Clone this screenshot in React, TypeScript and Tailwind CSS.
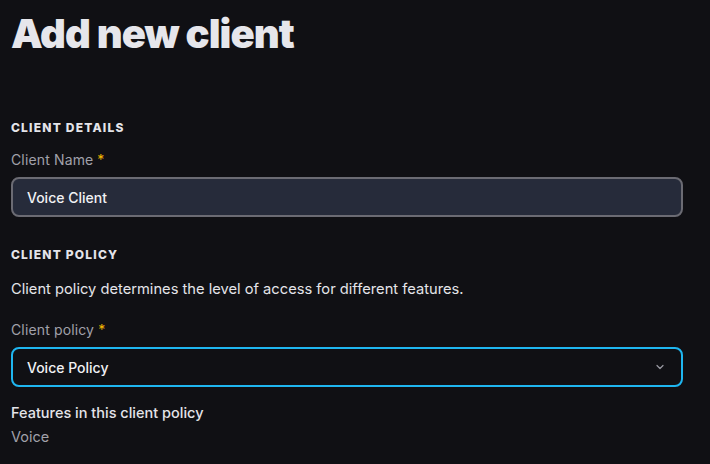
import React from "react";

export default function App() {
  return (
    <div className="min-h-[464px] w-full bg-[#101014] text-[#e4e4e9]" style={{ fontFamily: "Inter, 'Noto Sans', sans-serif" }}>
      <div className="pl-[11px] pt-[10px] w-[683px]">
        <h1 className="text-[40px] leading-[48px] font-black tracking-[-0.025em] text-[#e6e6eb]">Add new client</h1>
        <div className="mt-[62px] text-[12px] font-extrabold tracking-[0.1em] uppercase text-[#e4e4e9] leading-[16px]">Client details</div>
        <label className="mt-[14px] flex items-center gap-[4px] text-[14px] leading-[20px] tracking-[0.01em] text-[#a1a1aa]">
          Client Name<span className="text-[#f5b800]">*</span>
        </label>
        <div className="mt-[7px] h-[40px] rounded-[8px] border-2 border-[#6b6b73] bg-[#262b3a] flex items-center px-[14px] text-[14px] font-medium text-[#f1f1f4]">
          Voice Client
        </div>
        <div className="mt-[30px] text-[12px] font-extrabold tracking-[0.1em] uppercase text-[#e4e4e9] leading-[16px]">Client policy</div>
        <p className="mt-[16px] text-[14.7px] leading-[20px] text-[#e4e4e9]">Client policy determines the level of access for different features.</p>
        <label className="mt-[21px] flex items-center gap-[4px] text-[14px] leading-[20px] tracking-[0.01em] text-[#a1a1aa]">
          Client policy<span className="text-[#f5b800]">*</span>
        </label>
        <div className="mt-[7px] h-[40px] rounded-[8px] border-2 border-[#1fb6f0] bg-[#101014] flex items-center justify-between px-[14px] text-[14px] font-medium text-[#f1f1f4]">
          <span>Voice Policy</span>
          <svg width="10" height="10" viewBox="0 0 10 10" fill="none" className="mr-[2px]">
            <path d="M2 3.5 L5 6.5 L8 3.5" stroke="#9a9aa3" strokeWidth="1.2" strokeLinecap="round" strokeLinejoin="round" />
          </svg>
        </div>
        <div className="mt-[16px] text-[14.5px] leading-[20px] font-medium text-[#e4e4e9]">Features in this client policy</div>
        <div className="mt-[4px] text-[14.5px] leading-[20px] text-[#a1a1aa]">Voice</div>
      </div>
    </div>
  );
}
